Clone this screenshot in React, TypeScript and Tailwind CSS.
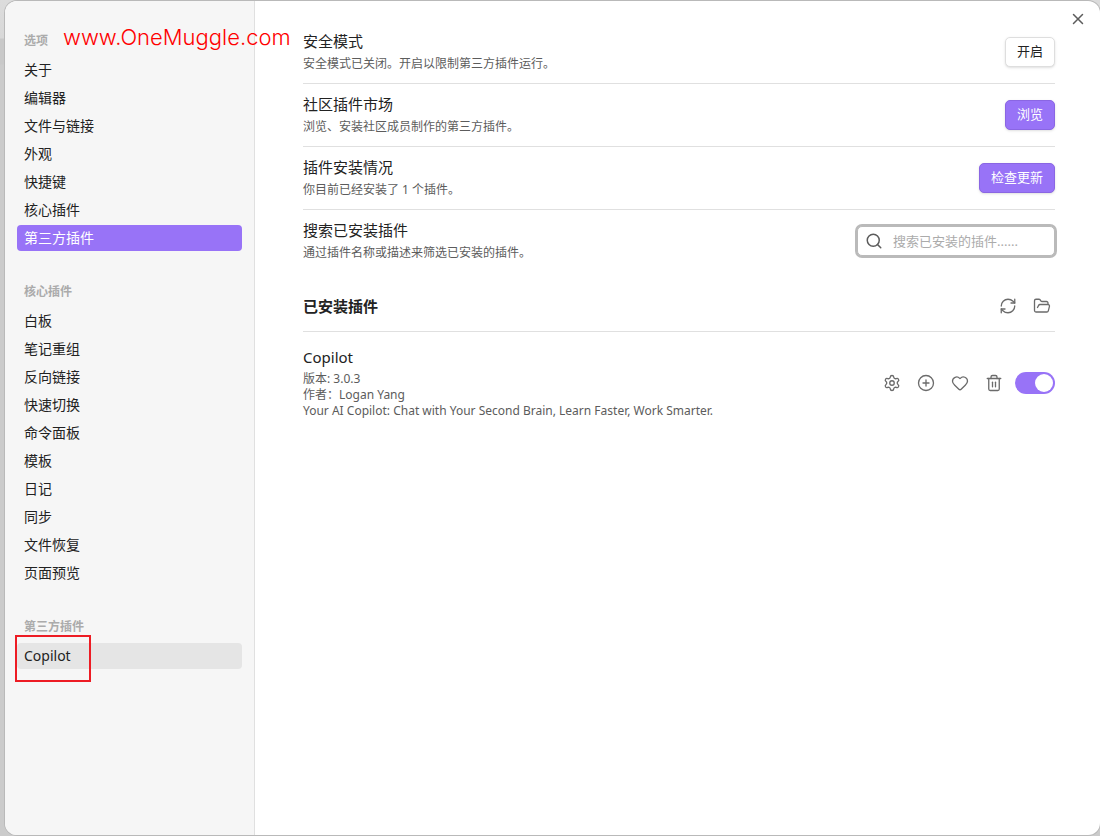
import { useState } from 'react';
import type { ReactNode } from 'react';
import { CirclePlus, FolderOpen, Heart, RefreshCw, Search, Settings, Trash2, X } from 'lucide-react';

interface NavGroup {
  title: string;
  items: string[];
}

const navGroups: NavGroup[] = [
  {
    title: '选项',
    items: ['关于', '编辑器', '文件与链接', '外观', '快捷键', '核心插件', '第三方插件'],
  },
  {
    title: '核心插件',
    items: ['白板', '笔记重组', '反向链接', '快速切换', '命令面板', '模板', '日记', '同步', '文件恢复', '页面预览'],
  },
  {
    title: '第三方插件',
    items: ['Copilot'],
  },
];

const pluginActions = [
  { label: '选项', icon: Settings },
  { label: '快捷键', icon: CirclePlus },
  { label: '赞助', icon: Heart },
  { label: '卸载', icon: Trash2 },
];

function NavItem({ label, active, onSelect }: { label: string; active: boolean; onSelect: () => void }) {
  const isCopilot = label === 'Copilot';
  const look = active
    ? 'bg-[#9873f7] text-white'
    : isCopilot
      ? 'bg-[#e5e5e5] text-[#222222]'
      : 'text-[#222222] hover:bg-[#e5e5e5]';

  return (
    <li className="relative">
      <button
        type="button"
        onClick={onSelect}
        className={`flex h-[26px] w-full items-center rounded px-[7px] text-left text-sm ${look}`}
      >
        {label}
      </button>
      {isCopilot && (
        <span className="pointer-events-none absolute -top-2 -left-0.5 h-[47px] w-[76px] border-2 border-[#ed1c24]" />
      )}
    </li>
  );
}

function SettingRow({ name, desc, first, children }: { name: string; desc: string; first?: boolean; children: ReactNode }) {
  return (
    <div className={`flex items-center gap-4 py-2.5 ${first ? '' : 'border-t border-[#e0e0e0]'}`}>
      <div className="flex-1">
        <div className="text-[15px] leading-5 text-[#222222]">{name}</div>
        <div className="mt-1 text-xs leading-[18px] text-[#5c5c5c]">{desc}</div>
      </div>
      {children}
    </div>
  );
}

function Button({ children, cta }: { children: ReactNode; cta?: boolean }) {
  return (
    <button
      type="button"
      className={`h-[30px] rounded-[5px] border px-[11px] text-[13px] shadow-sm ${
        cta ? 'border-[#8a66e3] bg-[#9873f7] text-white' : 'border-[#dedede] bg-white text-[#222222]'
      }`}
    >
      {children}
    </button>
  );
}

function IconButton({ label, icon: Icon }: { label: string; icon: typeof Settings }) {
  return (
    <button
      type="button"
      aria-label={label}
      className="flex h-[26px] w-[26px] items-center justify-center rounded text-[#6b6b6b] hover:bg-gray-100"
    >
      <Icon size={18} strokeWidth={1.75} />
    </button>
  );
}

export default function App() {
  const [activeItem, setActiveItem] = useState('0-第三方插件');
  const [query, setQuery] = useState('');
  const [enabled, setEnabled] = useState(true);

  return (
    <div className="flex min-h-screen bg-[linear-gradient(#dcdcdc_0px,#d8d8d8_38px,#c8c8c8_39px,#c8c8c8_64px,#cbcbcb_65px)] py-px pl-[5px] font-['Noto_Sans','Noto_Sans_CJK_SC',sans-serif]">
      <div className="relative flex flex-1 overflow-hidden rounded-xl bg-white shadow-[0_0_0_1px_#b9b9b9]">
        {/* Sidebar */}
        <nav className="flex w-[250px] shrink-0 flex-col gap-[25px] border-r border-[#e0e0e0] bg-[#f6f6f6] px-3 pt-6">
          {navGroups.map((group, groupIndex) => (
            <section key={group.title}>
              <h2 className="flex h-8 items-center px-[7px] text-xs font-semibold text-[#ababab]">{group.title}</h2>
              <ul className="flex flex-col gap-0.5">
                {group.items.map((item) => {
                  const id = `${groupIndex}-${item}`;
                  return (
                    <NavItem key={id} label={item} active={activeItem === id} onSelect={() => setActiveItem(id)} />
                  );
                })}
              </ul>
            </section>
          ))}
        </nav>

        {/* Content */}
        <main className="flex-1 pt-5 pr-[45px] pl-12">
          <SettingRow first name="安全模式" desc="安全模式已关闭。开启以限制第三方插件运行。">
            <Button>开启</Button>
          </SettingRow>
          <SettingRow name="社区插件市场" desc="浏览、安装社区成员制作的第三方插件。">
            <Button cta>浏览</Button>
          </SettingRow>
          <SettingRow name="插件安装情况" desc="你目前已经安装了 1 个插件。">
            <Button cta>检查更新</Button>
          </SettingRow>
          <SettingRow name="搜索已安装插件" desc="通过插件名称或描述来筛选已安装的插件。">
            <label className="relative">
              <Search size={18} strokeWidth={2} className="absolute top-1.5 left-2 text-[#5c5c5c]" />
              <input
                type="text"
                value={query}
                onChange={(e) => setQuery(e.target.value)}
                aria-label="搜索已安装插件"
                placeholder="搜索已安装的插件......"
                className="block h-[30px] w-[198px] rounded-[5px] border border-[#bababa] bg-white pr-2 pl-[35px] text-[13px] text-[#222222] ring-2 ring-[#bababa] outline-none placeholder:text-[#ababab]"
              />
            </label>
          </SettingRow>

          <div className="flex items-center gap-2 border-b border-[#e0e0e0] pt-[21px] pb-3">
            <h2 className="flex-1 text-[15px] leading-[22px] font-bold text-[#222222]">已安装插件</h2>
            <IconButton label="重新加载插件" icon={RefreshCw} />
            <IconButton label="打开插件文件夹" icon={FolderOpen} />
          </div>

          <div className="flex items-center gap-2 pt-[15px]">
            <div className="flex-1">
              <div className="text-[15px] leading-5 text-[#222222]">Copilot</div>
              <div className="mt-1 text-xs leading-4 text-[#5c5c5c]">
                <div>版本: 3.0.3</div>
                <div>作者：Logan Yang</div>
                <div>Your AI Copilot: Chat with Your Second Brain, Learn Faster, Work Smarter.</div>
              </div>
            </div>
            {pluginActions.map((action) => (
              <IconButton key={action.label} label={action.label} icon={action.icon} />
            ))}
            <input
              type="checkbox"
              role="switch"
              aria-label="启用 Copilot"
              checked={enabled}
              onChange={(e) => setEnabled(e.target.checked)}
              className="flex h-[22px] w-10 appearance-none items-center rounded-full bg-[#d4d4d4] px-0.5 before:block before:size-[18px] before:rounded-full before:bg-white before:content-[''] checked:justify-end checked:bg-[#9873f7]"
            />
          </div>
        </main>

        <button
          type="button"
          aria-label="关闭"
          className="absolute top-2 right-3 flex size-5 items-center justify-center text-[#5c5c5c]"
        >
          <X size={18} strokeWidth={2} />
        </button>

        <span className="pointer-events-none absolute top-5 left-[58px] font-[Inter] text-[22px] leading-8 font-light text-[#ff0000]">
          www.OneMuggle.com
        </span>
      </div>
    </div>
  );
}
